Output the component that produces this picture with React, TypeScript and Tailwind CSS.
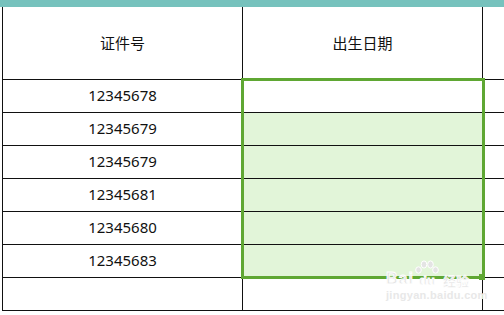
const ids = ['12345678', '12345679', '12345679', '12345681', '12345680', '12345683', ''];

function PawToes() {
  return (
    <svg width="24" height="14" viewBox="0 0 24 14" fill="#e4e4e4" stroke="#ffffff" strokeWidth="1">
      <ellipse cx="3.5" cy="10" rx="2.8" ry="3.2" />
      <ellipse cx="9" cy="4.5" rx="2.8" ry="3.6" />
      <ellipse cx="15.5" cy="4.5" rx="2.8" ry="3.6" />
      <ellipse cx="20.5" cy="10" rx="2.8" ry="3.2" />
    </svg>
  );
}

export default function App() {
  return (
    <div
      className="relative w-[504px] h-[315px] overflow-hidden bg-white text-[#111]"
      style={{ fontFamily: '"Noto Sans", "Noto Sans CJK SC", sans-serif' }}
    >
      {/* top bar */}
      <div className="h-[7px] bg-[#76c2bd]" />

      <div className="pl-[2px]">
        {/* header */}
        <div className="flex h-[73px] border-b border-[#111]">
          <div className="w-[240px] border-l border-[#111] flex items-center justify-center text-[15px]">
            证件号
          </div>
          <div className="w-[240px] border-l border-[#111] flex items-center justify-center text-[15px]">
            出生日期
          </div>
          <div className="flex-1 border-l border-[#111]" />
        </div>

        {/* rows */}
        {ids.map((id, i) => (
          <div key={i} className="flex h-[33px] border-b border-[#111]">
            <div className="w-[240px] border-l border-[#111] flex items-center justify-center text-[15px] pb-[1px]">
              {id}
            </div>
            <div
              className={
                i >= 1 && i <= 5
                  ? 'w-[240px] border-l border-[#111] bg-[#e2f5d9]'
                  : 'w-[240px] border-l border-[#111]'
              }
            />
            <div className="flex-1 border-l border-[#111]" />
          </div>
        ))}
      </div>

      {/* selection */}
      <div className="absolute left-[241px] top-[78px] w-[244px] h-[201px] border-[3px] border-[#5fa733]" />
      <div className="absolute left-[479px] top-[274px] w-[6px] h-[6px] bg-[#5fa733]" />

      {/* watermark */}
      <div className="absolute left-[386px] top-[260px] flex items-end pointer-events-none">
        <span
          className="text-[16px] font-bold leading-none text-[#e4e4e4] tracking-[1px] mb-[1px]"
          style={{ fontFamily: '"Liberation Sans", sans-serif', WebkitTextStroke: '0.8px #ffffff' }}
        >
          Bai
        </span>
        <div className="flex flex-col items-center ml-[1px]">
          <PawToes />
          <span
            className="text-[13px] font-bold leading-none text-[#e4e4e4] mb-[1px]"
            style={{ fontFamily: '"Liberation Sans", sans-serif', WebkitTextStroke: '0.8px #ffffff' }}
          >
            du
          </span>
        </div>
        <span
          className="text-[13px] font-bold leading-none text-[#e4e4e4] ml-[4px] mb-[1px]"
          style={{ fontFamily: '"Noto Sans CJK SC", sans-serif', WebkitTextStroke: '0.6px #ffffff' }}
        >
          经验
        </span>
      </div>
      <div
        className="absolute left-[386px] top-[290px] text-[11px] font-bold leading-none text-[#e8e8e8] tracking-[0.3px]"
        style={{ fontFamily: '"Liberation Sans", sans-serif' }}
      >
        jingyan.baidu.com
      </div>
    </div>
  );
}
